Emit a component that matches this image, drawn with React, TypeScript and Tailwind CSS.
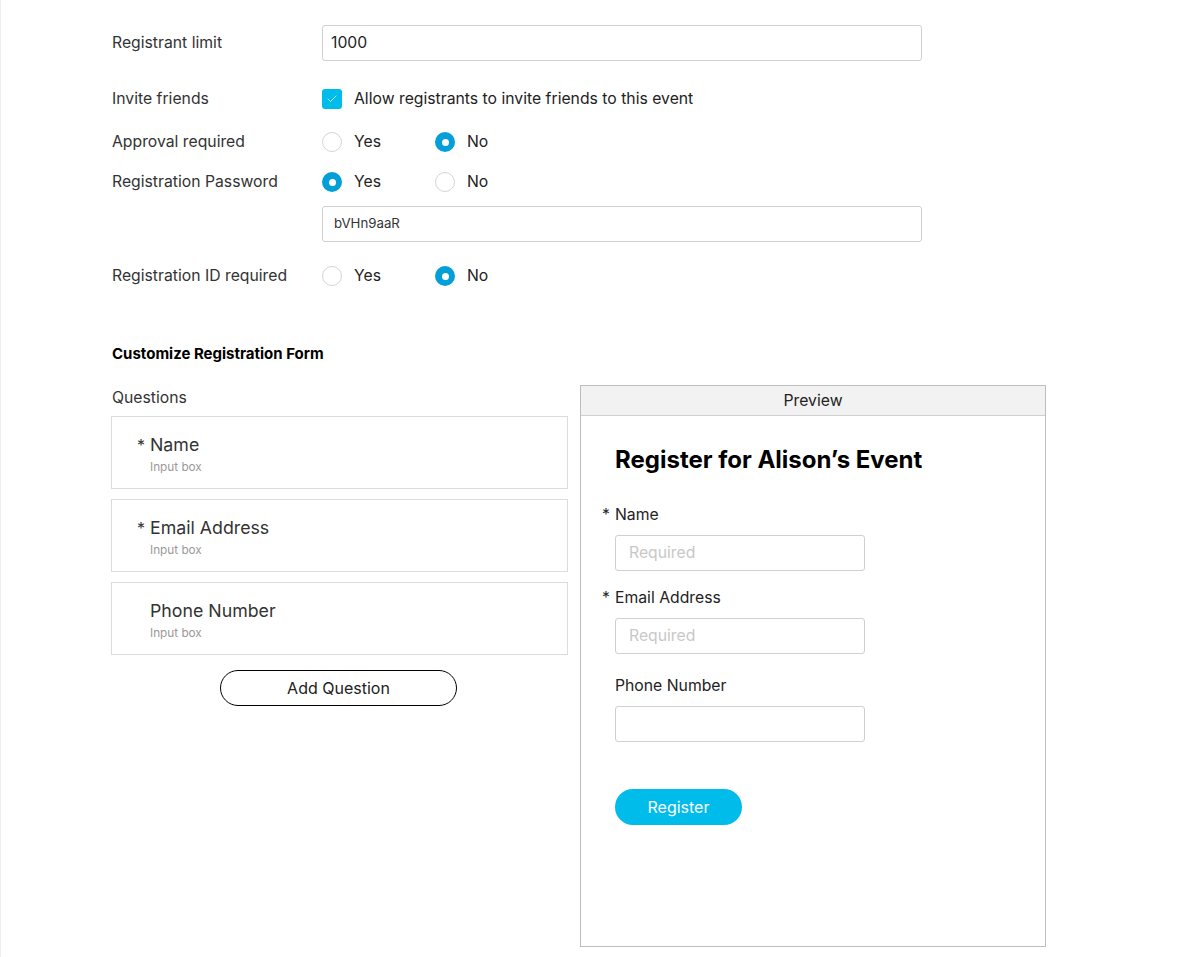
import { Check } from 'lucide-react';

const font = { fontFamily: 'Inter, "Liberation Sans", Arial, sans-serif' };

const Radio = ({ checked, label }: { checked: boolean; label: string }) => (
  <label className="flex items-center w-[113px]">
    {checked ? (
      <span className="w-5 h-5 rounded-full bg-[#049fd9] flex items-center justify-center">
        <span className="w-[7px] h-[7px] rounded-full bg-white" />
      </span>
    ) : (
      <span className="w-5 h-5 rounded-full border border-[#d4d4d4] bg-white" />
    )}
    <span className="ml-3 text-[15.75px] leading-[22px] text-[#222]">{label}</span>
  </label>
);

const Row = ({ label, children, className = '' }: { label: string; children: React.ReactNode; className?: string }) => (
  <div className={`flex items-center ${className}`}>
    <div className="w-[210px] text-[15.75px] leading-[22px] text-[#333]">{label}</div>
    <div className="flex items-center">{children}</div>
  </div>
);

const questions = [
  { name: 'Name', required: true },
  { name: 'Email Address', required: true },
  { name: 'Phone Number', required: false },
];

export default function App() {
  return (
    <div style={font} className="min-h-[957px] bg-white border-l border-[#eeeeee] pl-[111px] pt-[25px]">
      <Row label="Registrant limit">
        <div className="w-[600px] h-9 border border-[#d0d0d0] rounded-[3px] px-2 flex items-center text-[15.75px] text-[#222]">1000</div>
      </Row>

      <Row label="Invite friends" className="mt-[27px]">
        <span className="w-5 h-5 rounded-[3px] bg-[#00bceb] flex items-center justify-center">
          <Check className="w-3 h-3 text-white" strokeWidth={1.5} />
        </span>
        <span className="ml-3 text-[15.75px] leading-[22px] text-[#222]">Allow registrants to invite friends to this event</span>
      </Row>

      <Row label="Approval required" className="mt-[21px]">
        <Radio checked={false} label="Yes" />
        <Radio checked label="No" />
      </Row>

      <Row label="Registration Password" className="mt-[18px]">
        <Radio checked label="Yes" />
        <Radio checked={false} label="No" />
      </Row>

      <div className="ml-[210px] mt-[13px] w-[600px] h-9 border border-[#d0d0d0] rounded-[3px] px-[11px] flex items-center text-[13.25px] text-[#333]">
        bVHn9aaR
      </div>

      <Row label="Registration ID required" className="mt-[23px]">
        <Radio checked={false} label="Yes" />
        <Radio checked label="No" />
      </Row>

      <div className="mt-[56px] text-[15px] leading-[21px] font-bold text-black">Customize Registration Form</div>

      <div className="flex mt-[21px] -ml-px">
        <div className="w-[457px]">
          <div className="text-[15.75px] text-[#333] h-[21px] leading-[21px] mt-[2px] ml-px">Questions</div>
          <div className="mt-2 flex flex-col gap-[10px]">
            {questions.map((q) => (
              <div key={q.name} className="h-[73px] border border-[#dcdcdc] pl-[25px] pt-[17px]">
                <div className="flex items-baseline text-[17.75px] text-[#333] leading-[22px]">
                  <span className="w-[13px] text-[16px]">{q.required ? '*' : ''}</span>
                  <span>{q.name}</span>
                </div>
                <div className="ml-[13px] mt-[3px] text-[11.75px] text-[#999]">Input box</div>
              </div>
            ))}
          </div>
          <div className="mt-[15px] ml-[109px]">
            <button className="w-[237px] h-9 rounded-full border border-black text-[16px] text-[#222] bg-white">Add Question</button>
          </div>
        </div>

        <div className="ml-[12px] w-[466px] h-[562px] border border-[#bdbdbd] flex flex-col">
          <div className="h-[30px] bg-[#f2f2f2] border-b border-[#cfcfcf] flex items-center justify-center text-[15.75px] text-[#222]">Preview</div>
          <div className="pl-[34px] pt-[29px]">
            <div className="text-[24px] font-bold text-black leading-[30px]">Register for Alison’s Event</div>
            {questions.map((q, i) => (
              <div key={q.name} className={i === 0 ? 'mt-[30px]' : i === 1 ? 'mt-[17px]' : 'mt-[22px]'}>
                <div className="text-[15.75px] text-[#222] relative leading-[20px]">
                  {q.required && <span className="absolute -left-[13px]">*</span>}
                  {q.name}
                </div>
                <div className="mt-[10px] w-[250px] h-9 border border-[#d0d0d0] rounded-[3px] pl-[13px] flex items-center text-[15.75px] text-[#c8c8c8]">
                  {q.required ? 'Required' : ''}
                </div>
              </div>
            ))}
            <button className="mt-[47px] w-[127px] h-9 rounded-full bg-[#00bceb] text-white text-[16px]">Register</button>
          </div>
        </div>
      </div>
    </div>
  );
}
